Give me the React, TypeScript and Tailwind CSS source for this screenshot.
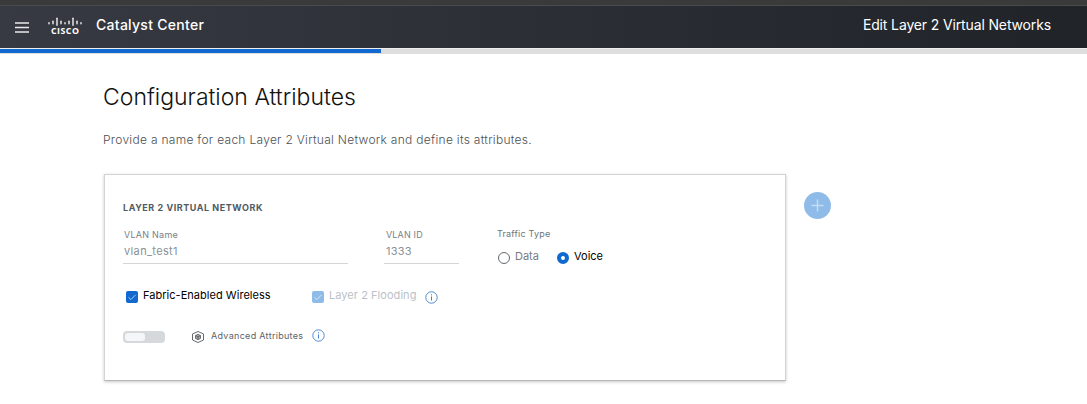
import React from "react";

function CiscoLogo() {
  const bars: [number, number, number][] = [
    [1, 5, 2.5],
    [5, 3.5, 4],
    [9, 0.5, 8.5],
    [13, 3.5, 4],
    [17, 5, 2.5],
    [21, 3.5, 4],
    [25, 0.5, 8.5],
    [29, 3.5, 4],
    [33, 5, 2.5],
  ];
  return (
    <div className="flex w-[34px] flex-col items-center">
      <svg width="34" height="10" viewBox="0 0 34 10">
        {bars.map(([x, y, h]) => (
          <rect key={x} x={x - 0.65} y={y} width="1.3" height={h} rx="0.65" fill="#fff" />
        ))}
      </svg>
      <span className="-mr-[0.4px] font-['Open_Sans',sans-serif] text-[8.8px] leading-[8px] font-bold tracking-[0.5px]">CISCO</span>
    </div>
  );
}

function InfoIcon() {
  return (
    <svg width="13" height="13" viewBox="0 0 13 13" fill="none" stroke="#3f7fcb" className="shrink-0">
      <circle cx="6.5" cy="6.5" r="5.7" strokeWidth="0.9" />
      <path d="M6.5 5.5v4M6.5 3.3v1.1" strokeWidth="1" />
    </svg>
  );
}

function Checkbox({ disabled = false }: { disabled?: boolean }) {
  return (
    <svg width="12" height="12" viewBox="0 0 12 12" className="shrink-0">
      <rect width="12" height="12" rx="2" fill={disabled ? "#8fbbe9" : "#1169cf"} />
      <path d="M2.5 6.3 4.9 8.6 9.6 3.8" fill="none" stroke={disabled ? "#d4e5f7" : "#a9cbf0"} strokeWidth="1" />
    </svg>
  );
}

function CubeIcon() {
  return (
    <svg width="12" height="12" viewBox="0 0 12 12" fill="none" stroke="#55595c" strokeWidth="0.8" className="shrink-0">
      <path d="M6 .5 11.5 3v6L6 11.5.5 9V3z" strokeWidth="0.9" />
      <path d="M6 3.3 8.5 4.6v2.8L6 8.7 3.5 7.4V4.6z" fill="#a9acae" />
      <path d="m3.5 4.6 2.5 1.3 2.5-1.3M6 5.9v2.8" />
    </svg>
  );
}

export default function App() {
  return (
    <div className="h-[404px] w-full overflow-hidden bg-white font-['Inter',sans-serif] whitespace-nowrap">
      <div className="h-[6px] border-b border-[#484b4c] bg-[#3a3a3a]" />
      <header className="flex h-[42px] items-start bg-linear-to-r from-[#373a42] to-[#202328] text-white">
        <svg width="14" height="11" viewBox="0 0 14 11" className="mt-[16px] ml-[15px]">
          <path d="M0 1h14M0 5.5h14M0 10h14" stroke="#e8e9ea" strokeWidth="1.5" />
        </svg>
        <div className="mt-[11px] ml-[19px]">
          <CiscoLogo />
        </div>
        <div className="mt-[9px] ml-[14px] text-[14px] leading-5 font-medium tracking-[0.28px]">Catalyst Center</div>
        <div className="mt-[9px] mr-[36px] ml-auto text-[14px] leading-5 tracking-[-0.14px]">Edit Layer 2 Virtual Networks</div>
      </header>
      <div className="h-[6px] border-t border-[#eeeeee] bg-[#dedede]">
        <div className="h-[4px] w-[381px] bg-[#1169cf]" />
      </div>

      <main className="pl-[104px]">
        <h1 className="-ml-px pt-[28px] text-[23px] leading-[30px] font-light text-[#111]">Configuration Attributes</h1>
        <p className="-ml-px mt-[20px] text-[12px] leading-4 font-light tracking-[0.29px] text-[#4c5053]">
          Provide a name for each Layer 2 Virtual Network and define its attributes.
        </p>

        <div className="mt-[26px] flex items-start gap-[18px]">
          <section className="h-[207px] w-[682px] border border-[#d2d3d4] border-b-[#b5b6b7] bg-white pl-[18px] shadow-[0_1px_3px_rgba(0,0,0,0.22)]">
            <h2 className="mt-[27px] text-[9px] leading-3 font-bold tracking-[0.55px] text-[#505a62]">LAYER 2 VIRTUAL NETWORK</h2>

            <div className="mt-[15px] flex items-start">
              <div className="h-[35px] w-[225px] border-b border-[#d3d5d7] pl-px">
                <div className="text-[9px] leading-3 tracking-[0.25px] text-[#7b8085]">VLAN Name</div>
                <div className="mt-[3px] text-[11px] leading-[14px] tracking-[0.35px] text-[#8a9197]">vlan_test1</div>
              </div>
              <div className="ml-[36px] h-[35px] w-[75px] border-b border-[#d3d5d7] pl-[2px]">
                <div className="text-[9px] leading-3 tracking-[0.15px] text-[#7b8085]">VLAN ID</div>
                <div className="mt-[3px] text-[11px] leading-[14px] tracking-[0.2px] text-[#8a9197]">1333</div>
              </div>
              <div className="-mt-px ml-[39px]">
                <div className="-ml-px text-[9px] leading-3 tracking-[0.2px] text-[#6f7478]">Traffic Type</div>
                <div className="mt-[9px] flex items-start text-[11px] leading-4">
                  <span className="mt-[3px] h-[12px] w-[12px] rounded-full border border-[#666a6e]" />
                  <span className="-mt-px ml-[5px] w-[42px] text-[#777c80]">Data</span>
                  <span className="mt-[3px] h-[12px] w-[12px] rounded-full border-4 border-[#1169cf] bg-white" />
                  <span className="-mt-px ml-[5px] text-black">Voice</span>
                </div>
              </div>
            </div>

            <div className="mt-[24px] ml-[3px] flex h-[16px] items-start text-[11px] leading-4">
              <span className="mt-[3px]"><Checkbox /></span>
              <span className="-mt-px ml-[5px] w-[169px] tracking-[0.03px] text-black">Fabric-Enabled Wireless</span>
              <span className="mt-[3px]"><Checkbox disabled /></span>
              <span className="-mt-px ml-[5px] w-[95.5px] tracking-[0.05px] text-[#bcc1c7]">Layer 2 Flooding</span>
              <span className="mt-[3px]"><InfoIcon /></span>
            </div>

            <div className="mt-[25px] flex h-[16px] items-start">
              <div className="mt-[2px] h-[12px] w-[42px] rounded-[4px] bg-[#d6d9db] p-[2px]">
                <div className="h-[8px] w-[20px] rounded-[3px] bg-[#f5f6f7]" />
              </div>
              <span className="mt-[2px] ml-[27px]"><CubeIcon /></span>
              <span className="-mt-px ml-[7px] w-[101px] text-[9px] leading-4 tracking-[0.3px] text-[#5d6266]">Advanced Attributes</span>
              <InfoIcon />
            </div>
          </section>

          <button className="mt-[18px] flex h-[27px] w-[27px] items-center justify-center rounded-full bg-[#8fbbe9]" aria-label="Add">
            <svg width="13" height="13" viewBox="0 0 13 13" stroke="#c4dbf4" strokeWidth="1.5">
              <path d="M6.5.5v12M.5 6.5h12" />
            </svg>
          </button>
        </div>
      </main>
    </div>
  );
}
